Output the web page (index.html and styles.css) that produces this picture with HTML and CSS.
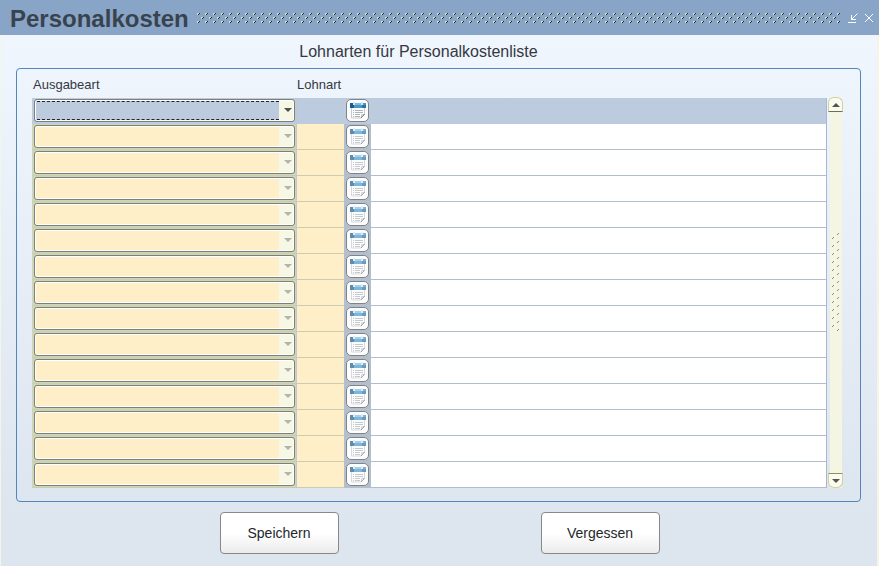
FILE: index.html
```
<!DOCTYPE html>
<html lang="de">
    <head>
        <meta charset="utf-8">
        <title>Personalkosten</title>
        <link rel="stylesheet" href="styles.css">
    </head>
    <body>
        <svg class="defs" width="0" height="0" aria-hidden="true">
            <symbol id="list-icon" viewBox="0 0 16 17">
                <path d="M1.5 4v12H11l3.5-3.500V4z" fill="#fbfcfd" stroke="#c6cbd0"/>
                <path d="M0 1h16v5H0z" fill="#4a97c8"/>
                <path d="M0 1h4v5H0z" fill="#1b5c90"/>
                <path d="M12 3h4v3h-4z" fill="#2a73a8"/>
                <path d="M3 0h2v3H3zM11 0h2v3h-2z" fill="#cfe8f6"/>
                <path d="M5 1h6v2H5z" fill="#7dbce0"/>
                <path d="M3 8.5h1M5 8.5h8M3 10.5h1M5 10.5h8M3 12.5h1M5 12.5h5M3 14.5h1M5 14.5h5" stroke="#b0b5ba"/>
                <path d="M14.5 12.5h-3V16" fill="none" stroke="#c6cbd0"/>
                <path d="M14.5 12L11 16" stroke="#747a80"/>
            </symbol>
        </svg>

        <header class="titlebar">
            <h1>Personalkosten</h1>
            <svg class="grip" aria-hidden="true">
                <defs>
                    <pattern id="grip-dots" width="8" height="8" patternUnits="userSpaceOnUse">
                        <path d="M0 0h2v1H0zM0 1h1v1H0zM4 4h2v1H4zM4 5h1v1H4z" fill="#d3dfbd"/>
                        <path d="M2 0h1v1H2zM1 1h1v1H1zM6 4h1v1H6zM5 5h1v1H5z" fill="#1c232a"/>
                    </pattern>
                </defs>
                <rect width="100%" height="100%" fill="url(#grip-dots)"/>
            </svg>
            <button type="button" class="winbtn" aria-label="Minimieren">
                <svg width="12" height="12" viewBox="0 0 12 12"><path d="M10.5 1.5l-6 6M4.5 3v4.500H9M1 10.5h8" fill="none" stroke="#fff"/></svg>
            </button>
            <button type="button" class="winbtn" aria-label="Schließen">
                <svg width="10" height="10" viewBox="0 0 10 10"><path d="M1 1l8 8M9 1L1 9" fill="none" stroke="#fff"/></svg>
            </button>
        </header>

        <form class="content">
            <h2>Lohnarten für Personalkostenliste</h2>
            <div class="panel">
                <table class="grid">
                    <colgroup>
                        <col class="col-kind">
                        <col class="col-wage">
                        <col class="col-pick">
                        <col>
                    </colgroup>
                    <thead>
                        <tr><th id="h-kind">Ausgabeart</th><th id="h-wage" colspan="3">Lohnart</th></tr>
                    </thead>
                    <tbody id="rows"></tbody>
                </table>
                <div class="scrollbar">
                    <button type="button" class="scroll-up" aria-label="Nach oben"></button>
                    <svg class="scroll-grip" aria-hidden="true">
                        <defs>
                            <pattern id="scroll-dots" width="8" height="8" patternUnits="userSpaceOnUse">
                                <path d="M6 0h1v1H6zM5 1h1v1H5zM1 4h1v1H1zM0 5h1v1H0z" fill="#8d8e7c"/>
                            </pattern>
                        </defs>
                        <rect width="100%" height="100%" fill="url(#scroll-dots)"/>
                    </svg>
                    <button type="button" class="scroll-down" aria-label="Nach unten"></button>
                </div>
            </div>
            <div class="actions">
                <button type="button">Speichern</button>
                <button type="button">Vergessen</button>
            </div>
        </form>
        <script src="rows.js"></script>
    </body>
</html>
```
FILE: styles.css
```
* {
    box-sizing: border-box;
}
body {
    margin: 0;
    min-height: 100vh;
    display: flex;
    flex-direction: column;
    font-family: "Liberation Sans", Arial, sans-serif;
    color: #34383f;
    background: #dde5ee;
}
button {
    padding: 0;
    font-family: inherit;
}
.defs {
    position: absolute;
}

/* title bar */
.titlebar {
    display: flex;
    align-items: center;
    height: 35px;
    padding: 0 5px 0 10px;
    background: #88a4c6;
}
h1 {
    margin: 2px 8px 0 0;
    font-size: 24px;
    line-height: 32px;
    color: #39434d;
}
.grip {
    flex: 1;
    min-width: 0;
    height: 10px;
    margin-right: 2px;
}
.winbtn {
    display: flex;
    margin-left: 5px;
    border: 0;
    background: none;
}

/* content */
.content {
    flex: 1;
    padding: 8px 16px 12px 15px;
    border: solid #f5f5e6;
    border-width: 0 2px 1px 1px;
    background: linear-gradient(#f0f6fe, #dde5ee 90%);
}
h2 {
    margin: 0 0 7px;
    padding-right: 40px;
    font-size: 16px;
    font-weight: normal;
    line-height: 18px;
    text-align: center;
}
.panel {
    display: flex;
    align-items: flex-end;
    padding: 5px 17px 13px 15px;
    border: 1px solid #5585bd;
    border-radius: 4px;
}

.grid {
    flex: 1;
    table-layout: fixed;
    border-collapse: separate;
    border-spacing: 0;
}
.col-kind {
    width: 264px;
}
.col-wage {
    width: 48px;
}
.col-pick {
    width: 27px;
}
th {
    height: 24px;
    padding: 0 1px 3px;
    font-size: 13px;
    font-weight: normal;
    text-align: left;
}
td {
    height: 26px;
    padding: 0;
    border-bottom: 1px solid #b3bdd0;
    background: #fff;
}
td:last-child {
    border-right: 1px solid #a9b8c9;
}
.kind {
    padding: 0 1px 0 2px;
    border-bottom-color: #c9cfae;
    background: #ced5b8;
}
.wage {
    background: #feefc8;
    border-bottom-color: #c9cfae;
    border-left: 1px solid #bfc8d4;
}
.pick {
    border-bottom-color: #b5bfcc;
    background: #b5bfcc;
}
.current td {
    background: #bdcbdf;
    border-bottom-color: #bdcbdf;
}

/* combo box */
.combo {
    position: relative;
    display: flex;
}
.combo select {
    width: 100%;
    height: 23px;
    border: 1px solid #7d8074;
    border-radius: 3px;
    appearance: none;
    background: linear-gradient(to left, #f7f7e6 15px, #feefc8 15px);
    box-shadow: inset 0 0 0 1px #fff;
    outline: 0;
}
.combo::after {
    content: "";
    position: absolute;
    right: 3px;
    top: 9px;
    border: 4px solid transparent;
    border-top-color: #b3b4a8;
    border-bottom: 0;
}
.current .combo::after {
    border-top-color: #4d4f48;
}
.current select {
    background: linear-gradient(to left, #f7f7e6 15px, #bdcbdf 15px);
}
.current .combo::before {
    content: "";
    position: absolute;
    left: 3px;
    right: 16px;
    top: 2px;
    bottom: 2px;
    border: 1px dashed #20242c;
    border-width: 1px 0;
}

.wage input,
.name input {
    display: block;
    width: 100%;
    height: 24px;
    padding: 0 4px;
    border: 0;
    outline: 0;
    background: none;
}
.pick button {
    display: flex;
    align-items: center;
    justify-content: center;
    width: 23px;
    height: 23px;
    margin: 0 2px;
    border: 1px solid #808488;
    border-radius: 5px;
    background: #fdfdfd;
}
.pick svg {
    opacity: 0.7;
}
.current .pick svg {
    opacity: 1;
}

/* scrollbar */
.scrollbar {
    display: flex;
    flex-direction: column;
    align-items: center;
    align-self: stretch;
    width: 15px;
    margin: 23px 0 0 1px;
    background: linear-gradient(to right, transparent 2px, #f5f5e4 2px, #f5f5e4 14px, transparent 14px);
}
.scrollbar button {
    display: flex;
    align-items: center;
    justify-content: center;
    width: 15px;
    height: 15px;
    border: 1px solid #cfd0a4;
    background: #fbfbee;
}
.scroll-up {
    border-radius: 6px 6px 0 0;
}
.scrollbar .scroll-up {
    border-bottom-color: #6c6d5a;
}
.scroll-down {
    border-radius: 0 0 6px 6px;
}
.scrollbar .scroll-down {
    border-top-color: #8b9454;
}
.scrollbar button::before {
    content: "";
    border: 4px solid transparent;
}
.scrollbar .scroll-up::before {
    border-top: 0;
    border-bottom-color: #54564e;
}
.scrollbar .scroll-down::before {
    border-bottom: 0;
    border-top-color: #54564e;
}
.scrollbar .scroll-down {
    margin-top: 20px;
}
.scroll-grip {
    width: 8px;
    height: 100px;
    margin: auto 0;
}

/* buttons below the list */
.actions {
    display: flex;
    justify-content: center;
    gap: 202px;
    margin: 10px 0 0 2px;
}
.actions button {
    width: 119px;
    height: 42px;
    border: 1px solid #85888c;
    border-radius: 4px;
    font-size: 14px;
    color: #24272b;
    background: linear-gradient(#fff 50%, #ebebeb);
}
```
FILE: rows.js
```
var ROW_COUNT = 15;
var rows = document.getElementById('rows');

for (var i = 0; i < ROW_COUNT; i++) {
    var tr = document.createElement('tr');
    if (i === 0) {
        tr.className = 'current';
    }
    tr.innerHTML =
        '<td class="kind"><div class="combo"><select aria-labelledby="h-kind"><option></option></select></div></td>' +
        '<td class="wage"><input type="text" aria-labelledby="h-wage"></td>' +
        '<td class="pick"><button type="button" aria-label="Lohnart wählen"><svg width="16" height="17"><use href="#list-icon"/></svg></button></td>' +
        '<td class="name"><input type="text" aria-label="Bezeichnung" readonly></td>';
    rows.appendChild(tr);
}
```
